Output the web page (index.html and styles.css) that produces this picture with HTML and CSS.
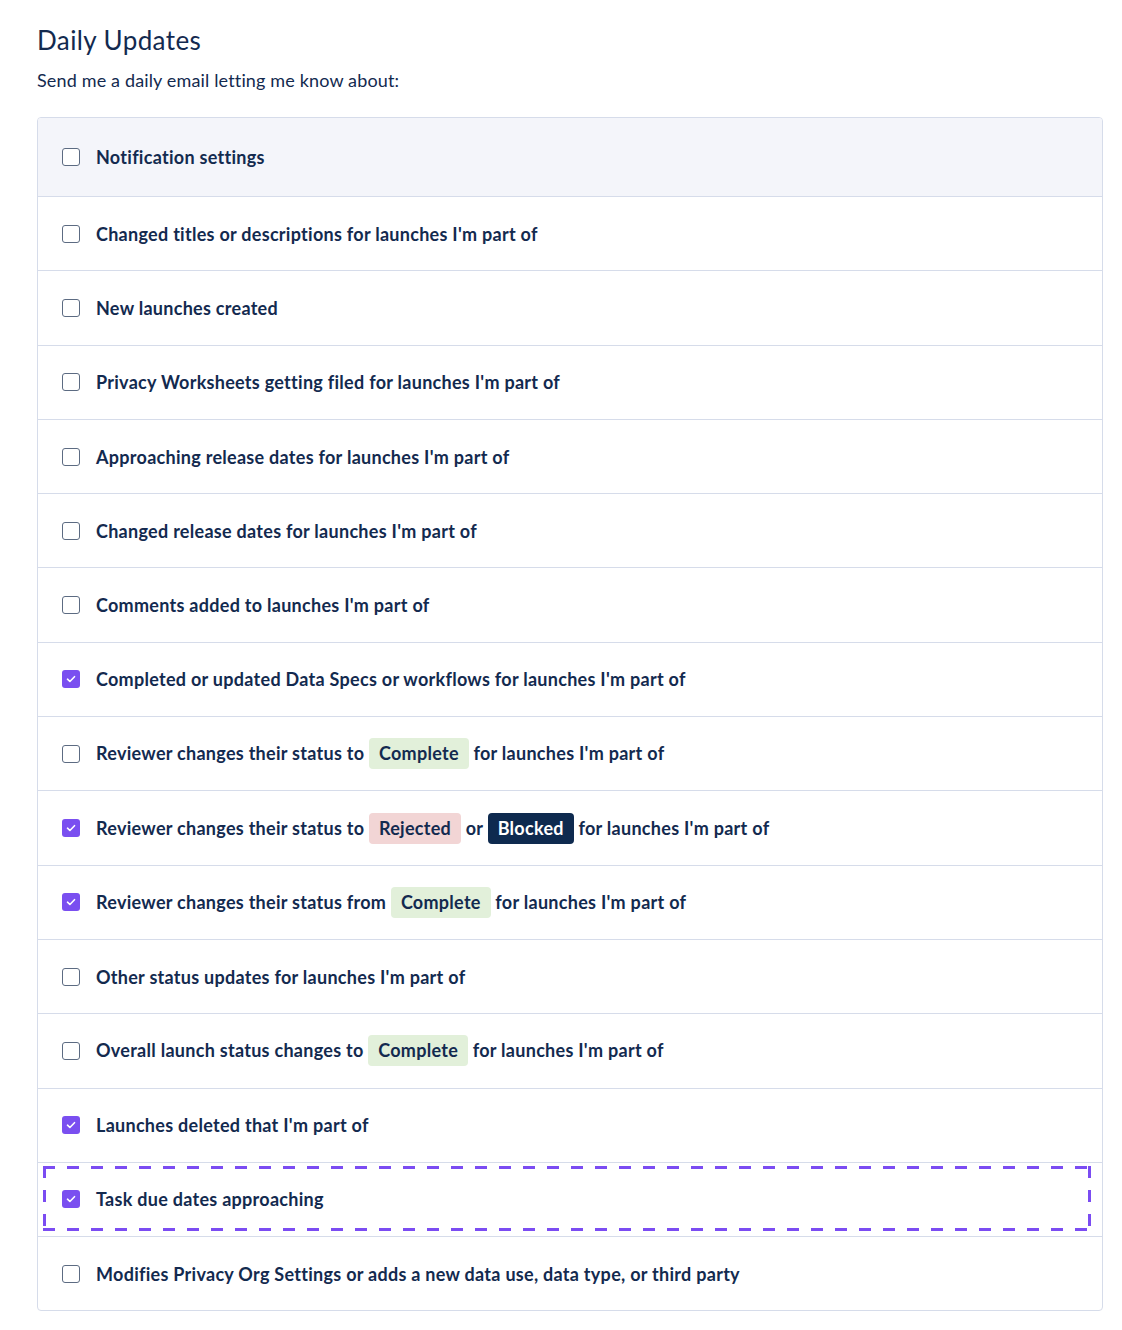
FILE: index.html
```html
<!DOCTYPE html>
<html lang="en">
<head>
    <meta charset="UTF-8">
    <title>Daily Updates</title>
    <link rel="stylesheet" href="styles.css">
</head>
<body>
    <div class="page">
        <h1>Daily Updates</h1>
        <p class="intro">Send me a daily email letting me know about:</p>

        <div class="lista">
            <div class="fila cabecera">
                <span class="caja"></span>
                <span>Notification settings</span>
            </div>
            <div class="fila">
                <span class="caja"></span>
                <span>Changed titles or descriptions for launches I'm part of</span>
            </div>
            <div class="fila">
                <span class="caja"></span>
                <span>New launches created</span>
            </div>
            <div class="fila">
                <span class="caja"></span>
                <span>Privacy Worksheets getting filed for launches I'm part of</span>
            </div>
            <div class="fila">
                <span class="caja"></span>
                <span>Approaching release dates for launches I'm part of</span>
            </div>
            <div class="fila">
                <span class="caja"></span>
                <span>Changed release dates for launches I'm part of</span>
            </div>
            <div class="fila">
                <span class="caja"></span>
                <span>Comments added to launches I'm part of</span>
            </div>
            <div class="fila">
                <span class="caja marcada"><svg viewBox="0 0 18 18"><path d="M5.5 9.2l2.4 2.3 4.6-4.8" /></svg></span>
                <span>Completed or updated Data Specs or workflows for launches I'm part of</span>
            </div>
            <div class="fila">
                <span class="caja"></span>
                <span>Reviewer changes their status to <span class="etiqueta verde">Complete</span> for launches I'm part of</span>
            </div>
            <div class="fila">
                <span class="caja marcada"><svg viewBox="0 0 18 18"><path d="M5.5 9.2l2.4 2.3 4.6-4.8" /></svg></span>
                <span>Reviewer changes their status to <span class="etiqueta roja">Rejected</span> or <span class="etiqueta oscura">Blocked</span> for launches I'm part of</span>
            </div>
            <div class="fila">
                <span class="caja marcada"><svg viewBox="0 0 18 18"><path d="M5.5 9.2l2.4 2.3 4.6-4.8" /></svg></span>
                <span>Reviewer changes their status from <span class="etiqueta verde">Complete</span> for launches I'm part of</span>
            </div>
            <div class="fila">
                <span class="caja"></span>
                <span>Other status updates for launches I'm part of</span>
            </div>
            <div class="fila">
                <span class="caja"></span>
                <span>Overall launch status changes to <span class="etiqueta verde">Complete</span> for launches I'm part of</span>
            </div>
            <div class="fila">
                <span class="caja marcada"><svg viewBox="0 0 18 18"><path d="M5.5 9.2l2.4 2.3 4.6-4.8" /></svg></span>
                <span>Launches deleted that I'm part of</span>
            </div>
            <div class="fila foco">
                <div class="foco-borde">
                    <span class="caja marcada"><svg viewBox="0 0 18 18"><path d="M5.5 9.2l2.4 2.3 4.6-4.8" /></svg></span>
                    <span>Task due dates approaching</span>
                </div>
            </div>
            <div class="fila">
                <span class="caja"></span>
                <span>Modifies Privacy Org Settings or adds a new data use, data type, or third party</span>
            </div>
        </div>
    </div>
</body>
</html>
```

FILE: styles.css
```css
body {
    font-family: Lato, "Open Sans", sans-serif;
    margin: 0;
    background-color: #fff;
    color: #132a4f;
}

.page {
    padding: 22px 19px 19px 37px;
}

h1 {
    font-size: 26px;
    font-weight: 400;
    letter-spacing: 0.4px;
    margin: 0;
    line-height: 36px;
}

.intro {
    font-size: 18px;
    letter-spacing: 0.15px;
    margin: 10px 0 25px;
    line-height: 24px;
}

.lista {
    border: 1px solid #d6dcea;
    border-radius: 4px;
    overflow: hidden;
}

.fila {
    display: flex;
    align-items: center;
    gap: 16px;
    height: 74.3px;
    padding: 0 24px;
    border-top: 1px solid #d6dcea;
    box-sizing: border-box;
    font-size: 18px;
    font-weight: 700;
    letter-spacing: 0.28px;
}

.cabecera {
    border-top: none;
    height: 78px;
    background-color: #f4f5fa;
}

.caja {
    flex: none;
    width: 18px;
    height: 18px;
    border: 1.5px solid #5c6b82;
    border-radius: 3px;
    box-sizing: border-box;
    background-color: #fff;
}

.caja.marcada {
    border: none;
    background-color: #7a4ff0;
}

.caja svg {
    display: block;
    width: 18px;
    height: 18px;
    fill: none;
    stroke: #fff;
    stroke-width: 1.6;
    stroke-linecap: round;
    stroke-linejoin: round;
}

.etiqueta {
    display: inline-block;
    padding: 0 10px;
    line-height: 31px;
    border-radius: 4px;
}

.verde {
    background-color: #e2f0da;
}

.roja {
    background-color: #f2d5d5;
}

.oscura {
    background-color: #0e2a4f;
    color: #fff;
}

.fila.foco {
    padding: 3px 11px 5px 5px;
}

.foco-borde {
    flex: 1;
    align-self: stretch;
    display: flex;
    align-items: center;
    gap: 16px;
    padding-left: 19px;
    background:
        repeating-linear-gradient(90deg, #7b4cf2 0 12px, transparent 12px 24px) left top / 100% 3px no-repeat,
        repeating-linear-gradient(90deg, #7b4cf2 0 12px, transparent 12px 24px) left bottom / 100% 3px no-repeat,
        repeating-linear-gradient(180deg, #7b4cf2 0 12px, transparent 12px 24px) left top / 3px 100% no-repeat,
        repeating-linear-gradient(180deg, #7b4cf2 0 12px, transparent 12px 24px) right top / 3px 100% no-repeat;
}
```
